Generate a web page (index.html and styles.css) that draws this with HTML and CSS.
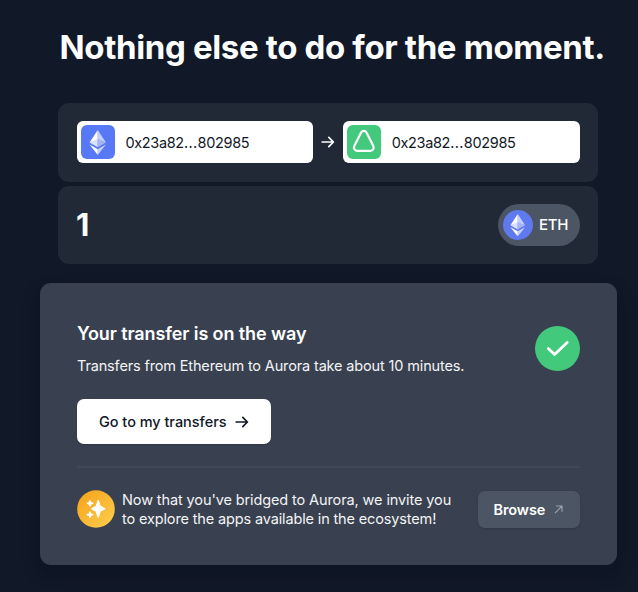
FILE: index.html
```
<!DOCTYPE html>
<html lang="en">
<head>
<meta charset="utf-8">
<title>Transfer</title>
<link rel="stylesheet" href="styles.css">
</head>
<body>
<svg width="0" height="0" class="defs">
  <symbol id="eth" viewBox="0 0 18 26">
    <path fill="#fff" d="M9 0 0.5 13 9 10z"/>
    <path fill="#c5cffc" d="M9 0 17.5 13 9 10z"/>
    <path fill="#dce2fd" d="M0.5 13 9 9.2V18z"/>
    <path fill="#a5b4fa" d="M17.5 13 9 9.2V18z"/>
    <path fill="#fff" d="M0.5 15.2 9 20v6z"/>
    <path fill="#c5cffc" d="M17.5 15.2 9 20v6z"/>
  </symbol>
  <symbol id="arrow" viewBox="0 0 14 14">
    <path d="M1.2 7h11.2M7.8 2.4l4.6 4.6-4.6 4.6" fill="none" stroke="currentColor" stroke-width="1.7" stroke-linecap="round" stroke-linejoin="round"/>
  </symbol>
</svg>
<main class="page">
  <h1 class="heading"><span>Nothing else to do for the moment.</span></h1>
  <section class="panel route">
    <div class="address">
      <span class="chain chain-eth"><svg width="17.5" height="25"><use href="#eth"/></svg></span>
      <span class="hash">0x23a82<span class="dots">...</span>802985</span>
    </div>
    <svg class="route-arrow" width="14" height="14"><use href="#arrow"/></svg>
    <div class="address">
      <span class="chain chain-aurora"><svg width="34" height="34" viewBox="0 0 34 34"><path d="M14.1 7.6c1.1-2.2 4.3-2.2 5.4 0l6.8 13.5c1 2.1-.4 4.7-2.7 4.7H10c-2.3 0-3.7-2.6-2.7-4.7z" fill="none" stroke="#fff" stroke-width="2.2"/></svg></span>
      <span class="hash">0x23a82<span class="dots">...</span>802985</span>
    </div>
  </section>
  <section class="panel amount">
    <span class="value">1</span>
    <span class="token"><span class="token-icon"><svg width="15.5" height="22.5"><use href="#eth"/></svg></span><span class="token-name">ETH</span></span>
  </section>
  <section class="card">
    <div class="status">
      <div>
        <h2 class="title"><span>Your transfer is on the way</span></h2>
        <p class="subtitle"><span>Transfers from Ethereum to Aurora take about 10 minutes.</span></p>
        <a class="button primary"><span>Go to my transfers</span><svg width="14" height="14"><use href="#arrow"/></svg></a>
      </div>
      <span class="check"><svg width="45" height="45" viewBox="0 0 45 45"><path d="M13.3 22.4l6.3 6.2L32.2 16.4" fill="none" stroke="#fff" stroke-width="2.8" stroke-linecap="round" stroke-linejoin="round"/></svg></span>
    </div>
    <div class="explore">
      <svg class="sparkles" width="38" height="38" viewBox="0 0 38 38">
        <defs><linearGradient id="gold" x1="0" y1="0" x2="1" y2="1"><stop offset="0.1" stop-color="#f7a51e"/><stop offset="0.9" stop-color="#fccb4a"/></linearGradient></defs>
        <circle cx="19" cy="19" r="18.8" fill="url(#gold)"/>
        <g fill="#fff" stroke="#fff" stroke-width="1.2" stroke-linejoin="round">
          <path d="M21.2 10.5l2.1 5.9 4.5 2.4-4.5 2.4-2.1 6.1-2.1-6.1-4.5-2.4 4.5-2.4z"/>
          <path d="M13 10.4l.8 2.1 2.1.8-2.1.8-.8 2.1-.8-2.1-2.1-.8 2.1-.8z"/>
          <path d="M13 21.8l.8 2.1 2.1.8-2.1.8-.8 2.1-.8-2.1-2.1-.8 2.1-.8z"/>
        </g>
      </svg>
      <p class="invite"><span class="line-a">Now that you've bridged to Aurora, we invite you</span><br><span class="line-b">to explore the apps available in the ecosystem!</span></p>
      <a class="button secondary"><span>Browse</span><svg width="9" height="9" viewBox="0 0 9 9"><path d="M1 8.2L8 1M2.2 1H8v5.8" fill="none" stroke="#a0a6af" stroke-width="1.1"/></svg></a>
    </div>
  </section>
</main>
</body>
</html>
```

FILE: styles.css
```
* { box-sizing: border-box; }
body {
  margin: 0;
  min-height: 592px;
  background: #111827;
  color: #fff;
  font-family: Inter, "Liberation Sans", sans-serif;
}
.defs { position: absolute; }
h1, h2, p { margin: 0; font-weight: inherit; }
svg { display: block; flex: none; }
span { white-space: nowrap; }
.page { width: 540px; margin-left: 58px; padding-top: 27px; }
.heading {
  height: 76px;
  padding-left: 1.5px;
  font-size: 33px;
  line-height: 40px;
  font-weight: 700;
  letter-spacing: -0.35px;
}
.panel {
  display: flex;
  align-items: center;
  height: 78.5px;
  padding: 0 18.5px 0 19px;
  border-radius: 11px;
  background: #212936;
}
.address {
  display: flex;
  align-items: center;
  gap: 11px;
  flex: 1;
  height: 42px;
  padding-left: 3.5px;
  border-radius: 6px;
  background: #fff;
  color: #111827;
}
.chain {
  display: flex;
  align-items: center;
  justify-content: center;
  width: 34px;
  height: 34px;
  border-radius: 6px;
}
.chain-eth { background: #5879f5; }
.chain-aurora { background: #43c97b; }
.hash { font-size: 14.5px; letter-spacing: -0.35px; }
.dots { letter-spacing: 0.4px; }
.route-arrow { margin: 0 8px; }
.amount { justify-content: space-between; margin-top: 4px; }
.value { margin-left: -1px; font-size: 31px; font-weight: 700; }
.token {
  display: flex;
  align-items: center;
  gap: 6px;
  width: 82px;
  height: 42px;
  padding-left: 5.5px;
  border-radius: 21px;
  background: #4b5563;
}
.token-icon {
  display: flex;
  align-items: center;
  justify-content: center;
  width: 30px;
  height: 30px;
  border-radius: 50%;
  background: #5f79ee;
}
.token-name { font-size: 15px; font-weight: 500; letter-spacing: -0.3px; }
.card {
  width: 577.5px;
  height: 282px;
  margin: 19px 0 0 -18.5px;
  padding: 38px 37.5px 0;
  border-radius: 11px;
  background: #394150;
  box-shadow: 0 8px 16px rgba(4, 18, 27, .4);
}
.status {
  display: flex;
  justify-content: space-between;
  height: 147px;
  border-bottom: 2px solid #414958;
}
.title { font-size: 18px; line-height: 26px; font-weight: 600; letter-spacing: -0.1px; }
.subtitle {
  margin-top: 7px;
  color: #f3f4f6;
  font-size: 14.5px;
  line-height: 24px;
  letter-spacing: -0.15px;
}
.button { display: flex; align-items: center; }
.primary {
  gap: 8px;
  width: 194px;
  height: 45px;
  margin-top: 21px;
  padding-left: 22px;
  border-radius: 7px;
  background: #fff;
  color: #111827;
  font-size: 14.5px;
  font-weight: 500;
  letter-spacing: -0.03px;
  box-shadow: 0 1px 2px rgba(0, 0, 0, .2);
}
.check {
  width: 45px;
  height: 45px;
  margin-top: 5px;
  border-radius: 50%;
  background: #43c97b;
}
.explore { display: flex; align-items: center; height: 38px; margin-top: 22px; }
.invite { margin-left: 7px; color: #f3f4f6; font-size: 14.5px; line-height: 19px; }
.line-a { letter-spacing: -0.11px; }
.line-b { letter-spacing: -0.14px; }
.secondary {
  gap: 9px;
  width: 102px;
  height: 37px;
  margin-left: auto;
  padding-left: 16px;
  border-radius: 7px;
  background: #4b5563;
  font-size: 14.5px;
  font-weight: 600;
  letter-spacing: -0.1px;
  box-shadow: 0 1px 2px rgba(0, 0, 0, .15);
}
```
